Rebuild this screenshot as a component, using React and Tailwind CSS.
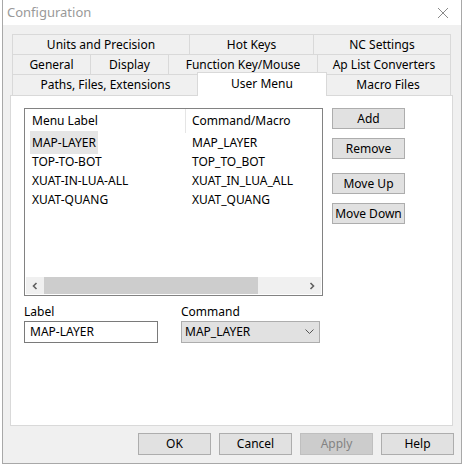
import React from 'react';

const TAB_ROWS = [
    [
        { label: 'Units and Precision', w: 'w-[177px]' },
        { label: 'Hot Keys', w: 'w-[124px]' },
        { label: 'NC Settings', w: 'w-[138px]' },
    ],
    [
        { label: 'General', w: 'w-[78px]' },
        { label: 'Display', w: 'w-[78px]' },
        { label: 'Function Key/Mouse', w: 'w-[149px]' },
        { label: 'Ap List Converters', w: 'w-[134px]' },
    ],
];

const ITEMS = [
    { label: 'MAP-LAYER', cmd: 'MAP_LAYER' },
    { label: 'TOP-TO-BOT', cmd: 'TOP_TO_BOT' },
    { label: 'XUAT-IN-LUA-ALL', cmd: 'XUAT_IN_LUA_ALL' },
    { label: 'XUAT-QUANG', cmd: 'XUAT_QUANG' },
];

function Tab({ label, w, last }) {
    return (
        <div className={`${w} h-[20px] flex items-center justify-center border-t border-l border-[#d9d9d9] ${last ? 'border-r' : ''}`}>
            {label}
        </div>
    );
}

function Button({ children, disabled, className = '' }) {
    return (
        <div
            className={`w-[73px] flex items-center justify-center border ${
                disabled ? 'bg-[#cccccc] border-[#bfbfbf] text-[#838383]' : 'bg-[#e1e1e1] border-[#adadad] text-black'
            } ${className}`}
        >
            {children}
        </div>
    );
}

export default function App() {
    return (
        <div className="w-[465px] h-[467px] bg-white overflow-hidden text-[12px] text-black" style={{ fontFamily: '"Noto Sans", sans-serif' }}>
            <div className="ml-[2px] w-[460px] h-[464px] border-x border-b border-[#a8a8a8] bg-[#f0f0f0] flex flex-col">
                {/* Title bar */}
                <div className="h-[25px] bg-white flex items-center justify-between pl-[4px] pr-[12px]">
                    <span className="text-[13px] text-[#999999]">Configuration</span>
                    <svg width="12" height="12" viewBox="0 0 12 12">
                        <path d="M1 1 L11 11 M11 1 L1 11" stroke="#8a8a8a" strokeWidth="1" />
                    </svg>
                </div>

                <div className="pt-[9px] pl-[7px]">
                    {/* Tabs */}
                    <div className="ml-[2px] w-[439px] leading-none">
                        {TAB_ROWS.map((row, i) => (
                            <div key={i} className="flex">
                                {row.map((t, j) => (
                                    <Tab key={t.label} {...t} last={j === row.length - 1} />
                                ))}
                            </div>
                        ))}
                        <div className="flex items-start h-[21px]">
                            <div className="w-[186px] h-[21px] flex items-center justify-center border-t border-l border-[#d9d9d9]">
                                Paths, Files, Extensions
                            </div>
                            <div className="relative z-10 -mt-[2px] -mx-[1px] w-[130px] h-[24px] bg-white flex items-start pt-[5px] justify-center border-t border-x border-[#d9d9d9]">
                                User Menu
                            </div>
                            <div className="w-[125px] h-[21px] flex items-center justify-center border-t border-r border-[#d9d9d9]">
                                Macro Files
                            </div>
                        </div>
                    </div>

                    {/* Panel */}
                    <div className="w-[443px] h-[331px] bg-white border border-[#d9d9d9] pt-[12px] pl-[13px]">
                        <div className="flex">
                            {/* List */}
                            <div className="w-[299px] h-[188px] border border-[#828282] flex flex-col">
                                <div className="flex h-[24px] items-center">
                                    <div className="w-[160px] pl-[7px]">Menu Label</div>
                                    <div className="w-px h-[24px] bg-[#e5e5e5]" />
                                    <div className="pl-[6px]">Command/Macro</div>
                                </div>
                                <div className="flex-1">
                                    {ITEMS.map((it, i) => (
                                        <div key={it.label} className="flex h-[19px] items-center">
                                            <div className="w-[161px] pl-[5px]">
                                                <span className={`px-[2px] py-[3px] ${i === 0 ? 'bg-[#e5e5e5]' : ''}`}>{it.label}</span>
                                            </div>
                                            <div className="pl-[6px]">{it.cmd}</div>
                                        </div>
                                    ))}
                                </div>
                                {/* Horizontal scrollbar */}
                                <div className="h-[17px] mb-[1px] mx-px flex bg-[#f0f0f0]">
                                    <div className="w-[18px] flex items-center justify-center">
                                        <svg width="8" height="8" viewBox="0 0 8 8">
                                            <path d="M5.5 1 L2.5 4 L5.5 7" stroke="#606060" strokeWidth="1.6" fill="none" />
                                        </svg>
                                    </div>
                                    <div className="w-[214px] h-full bg-[#cdcdcd]" />
                                    <div className="flex-1" />
                                    <div className="w-[18px] flex items-center justify-center">
                                        <svg width="8" height="8" viewBox="0 0 8 8">
                                            <path d="M2.5 1 L5.5 4 L2.5 7" stroke="#606060" strokeWidth="1.6" fill="none" />
                                        </svg>
                                    </div>
                                </div>
                            </div>

                            {/* Side buttons */}
                            <div className="ml-[9px] flex flex-col">
                                <Button className="h-[21px]">Add</Button>
                                <Button className="h-[21px] mt-[9px]">Remove</Button>
                                <Button className="h-[21px] mt-[14px]">Move Up</Button>
                                <Button className="h-[21px] mt-[9px]">Move Down</Button>
                            </div>
                        </div>

                        {/* Label / Command */}
                        <div className="flex mt-[7px]">
                            <div className="w-[157px]">
                                <div className="h-[18px] leading-[18px]">Label</div>
                                <div className="w-[134px] h-[22px] border border-[#7a7a7a] flex items-center pl-[5px]">MAP-LAYER</div>
                            </div>
                            <div>
                                <div className="h-[18px] leading-[18px]">Command</div>
                                <div className="w-[139px] h-[22px] border border-[#adadad] bg-[#e1e1e1] flex items-center justify-between pl-[3px] pr-[5px]">
                                    <span>MAP_LAYER</span>
                                    <svg width="9" height="6" viewBox="0 0 9 6">
                                        <path d="M0.5 0.5 L4.5 4.5 L8.5 0.5" stroke="#555555" strokeWidth="1" fill="none" />
                                    </svg>
                                </div>
                            </div>
                        </div>
                    </div>
                </div>

                {/* Bottom buttons */}
                <div className="flex justify-end gap-[8px] pr-[7px] mt-[7px]">
                    <Button className="h-[22px]">OK</Button>
                    <Button className="h-[22px]">Cancel</Button>
                    <Button className="h-[22px]" disabled>Apply</Button>
                    <Button className="h-[22px]">Help</Button>
                </div>
            </div>
        </div>
    );
}
